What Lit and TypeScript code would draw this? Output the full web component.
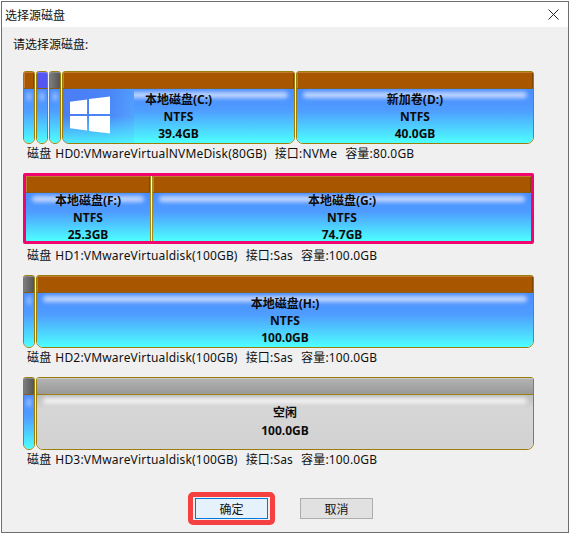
import { LitElement, html, css, nothing } from "lit";
import { customElement } from "lit/decorators.js";
import { classMap } from "lit/directives/class-map.js";

interface Part {
    w?: number;
    lines?: string[];
    free?: boolean;
    logo?: boolean;
    tone?: "brown" | "violet" | "dark";
}

interface Disk {
    parts: Part[];
    caption: string;
    selected?: boolean;
}

const DISKS: Disk[] = [
    {
        parts: [
            { w: 12 },
            { w: 12, tone: "violet" },
            { w: 12, tone: "dark" },
            { w: 233, logo: true, lines: ["本地磁盘(C:)", "NTFS", "39.4GB"] },
            { lines: ["新加卷(D:)", "NTFS", "40.0GB"] },
        ],
        caption: "磁盘 HD0:VMwareVirtualNVMeDisk(80GB)  接口:NVMe  容量:80.0GB",
    },
    {
        selected: true,
        parts: [
            { w: 125, lines: ["本地磁盘(F:)", "NTFS", "25.3GB"] },
            { lines: ["本地磁盘(G:)", "NTFS", "74.7GB"] },
        ],
        caption: "磁盘 HD1:VMwareVirtualdisk(100GB)  接口:Sas  容量:100.0GB",
    },
    {
        parts: [
            { w: 12, tone: "dark" },
            { lines: ["本地磁盘(H:)", "NTFS", "100.0GB"] },
        ],
        caption: "磁盘 HD2:VMwareVirtualdisk(100GB)  接口:Sas  容量:100.0GB",
    },
    {
        parts: [
            { w: 12, tone: "dark" },
            { free: true, lines: ["空闲", "100.0GB"] },
        ],
        caption: "磁盘 HD3:VMwareVirtualdisk(100GB)  接口:Sas  容量:100.0GB",
    },
];

@customElement("app-root")
export class AppRoot extends LitElement {
    static styles = css`
        :host {
            display: block;
            width: 570px;
            height: 534px;
            box-sizing: border-box;
            padding: 1px;
            background: #fff;
            font-family: "Noto Sans", "Noto Sans CJK SC", sans-serif;
            font-size: 12px;
            color: #111;
        }
        .window {
            height: 100%;
            box-sizing: border-box;
            border: 1px solid #6e6e6e;
            background: #f0f0f0;
            display: flex;
            flex-direction: column;
        }
        .titlebar {
            height: 25px;
            flex: none;
            background: #fff;
            display: flex;
            align-items: center;
            justify-content: space-between;
            padding: 0 9px 0 3px;
        }
        .titlebar svg {
            display: block;
        }
        .content {
            flex: 1;
            padding: 7px 34px 0 21px;
            display: flex;
            flex-direction: column;
        }
        .prompt {
            height: 22px;
            line-height: 22px;
            margin: 0 0 15px -10px;
        }
        .disk {
            height: 73px;
            box-sizing: border-box;
            display: flex;
            gap: 1px;
        }
        .disk.selected {
            height: 71px;
            border: 3px solid #f0056f;
            border-radius: 2px;
            background: #fff;
        }
        .caption {
            height: 20px;
            line-height: 20px;
            margin: 0 0 9px 4px;
            white-space: pre;
            letter-spacing: 0.18px;
            word-spacing: 0.7px;
        }
        .disk.selected + .caption {
            margin-top: 2px;
        }
        .part {
            position: relative;
            flex: 1 1 0;
            min-width: 0;
            box-sizing: border-box;
            border: 1px solid #9a7d0a;
            border-radius: 3px 3px 7px 7px;
            display: flex;
            flex-direction: column;
            overflow: hidden;
        }
        .selected .part {
            border: none;
            border-radius: 0;
        }
        .selected .part:first-child {
            border-right: 1px solid #a58a20;
        }
        .selected .part + .part {
            border-left: 1px solid #a58a20;
        }
        .head {
            height: 17px;
            flex: none;
            box-sizing: border-box;
            background: #a85700;
            border-bottom: 1px solid #8a5a10;
            box-shadow: inset 0 1px 0 #c47a30, inset 1px 0 0 #c47a30, inset -1px 0 0 #7e4600;
        }
        .head.violet {
            background: #5555f0;
            box-shadow: inset 0 1px 0 #8080ff;
        }
        .head.dark {
            background: linear-gradient(90deg, #7c7c7c, #555);
            box-shadow: inset 0 1px 0 #8a8a8a;
        }
        .body {
            flex: 1;
            position: relative;
            background: linear-gradient(#4a8cff 0%, #4f9dff 40%, #4dffff 100%);
        }
        .body::before {
            content: "";
            position: absolute;
            left: 6px;
            right: 6px;
            top: 3px;
            height: 6px;
            border-radius: 3px;
            background: #c4d8ff;
            filter: blur(2px);
        }
        .part.narrow .body::before {
            left: 3px;
            right: 3px;
            top: 3px;
            height: 9px;
            background: #a8c8ff;
        }
        .part.free .head {
            background: linear-gradient(#b4b4b4, #999);
            border-bottom-color: #9a7d0a;
            box-shadow: inset 0 1px 0 #c8c8c8;
        }
        .part.free .body {
            background: linear-gradient(#bcbcbc, #d6d6d6 25%, #d2d2d2);
        }
        .part.free .body::before {
            background: #f2f2f2;
        }
        .logo {
            position: absolute;
            left: 0;
            top: 0;
            bottom: 0;
            width: 71px;
            background: linear-gradient(100deg, #4c7cf4, #4a86f8 60%, #55a6ff);
        }
        .logo-mask {
            position: absolute;
            left: 0;
            right: 0;
            bottom: 0;
            height: 50%;
            background: linear-gradient(rgba(77, 255, 255, 0), rgba(77, 255, 255, 0.85));
        }
        .logo svg {
            position: absolute;
            left: 7px;
            top: 7px;
        }
        .labels {
            position: absolute;
            inset: 0;
            display: flex;
            flex-direction: column;
            align-items: center;
            justify-content: center;
            font-weight: 700;
            line-height: 17px;
            color: #0c0c0c;
            white-space: nowrap;
        }
        .labels.free {
            line-height: 18px;
        }
        .footer {
            margin-top: auto;
            padding: 0 0 13px 0;
            margin-left: 172px;
            display: flex;
            gap: 32px;
        }
        .btn {
            position: relative;
            width: 73px;
            height: 21px;
            box-sizing: border-box;
            border: 1px solid #adadad;
            background: #e1e1e1;
            font: inherit;
            color: #111;
            padding: 0;
        }
        .btn.primary {
            border-color: #0078d7;
            background: #e5f1fb;
        }
        .btn.primary::after {
            content: "";
            position: absolute;
            inset: -7px -8px;
            border: 5px solid #f44040;
            border-radius: 5px;
        }
    `;

    private renderPart(p: Part) {
        const style = p.w ? `flex: 0 0 ${p.w}px` : "";
        return html`
            <div
                class=${classMap({ part: true, narrow: !p.lines, free: !!p.free })}
                style=${style}
            >
                <div class="head ${p.tone ?? "brown"}"></div>
                <div class="body">
                    ${p.logo
                        ? html`<div class="logo">
                              <div class="logo-mask"></div>
                              <svg width="40" height="38" viewBox="0 0 41 38">
                                  <path
                                      fill="#fff"
                                      d="M0 5.500 17.500 3V18H0ZM19.500 2.700 41 0V18H19.500ZM0 20H17.500V35L0 32.500ZM19.500 20H41V38L19.500 35.300Z"
                                  />
                              </svg>
                          </div>`
                        : nothing}
                    ${p.lines
                        ? html`<div class="labels ${p.free ? "free" : ""}">
                              ${p.lines.map((l) => html`<div>${l}</div>`)}
                          </div>`
                        : nothing}
                </div>
            </div>
        `;
    }

    render() {
        return html`
            <div class="window">
                <div class="titlebar">
                    <span>选择源磁盘</span>
                    <svg width="11" height="11" viewBox="0 0 11 11">
                        <path d="M.5.500 10.500 10.500M10.500.500.500 10.500" stroke="#222" fill="none" />
                    </svg>
                </div>
                <div class="content">
                    <div class="prompt">请选择源磁盘:</div>
                    ${DISKS.map(
                        (d) => html`
                            <div class=${classMap({ disk: true, selected: !!d.selected })}>
                                ${d.parts.map((p) => this.renderPart(p))}
                            </div>
                            <div class="caption">${d.caption}</div>
                        `
                    )}
                    <div class="footer">
                        <button class="btn primary">确定</button>
                        <button class="btn">取消</button>
                    </div>
                </div>
            </div>
        `;
    }
}
